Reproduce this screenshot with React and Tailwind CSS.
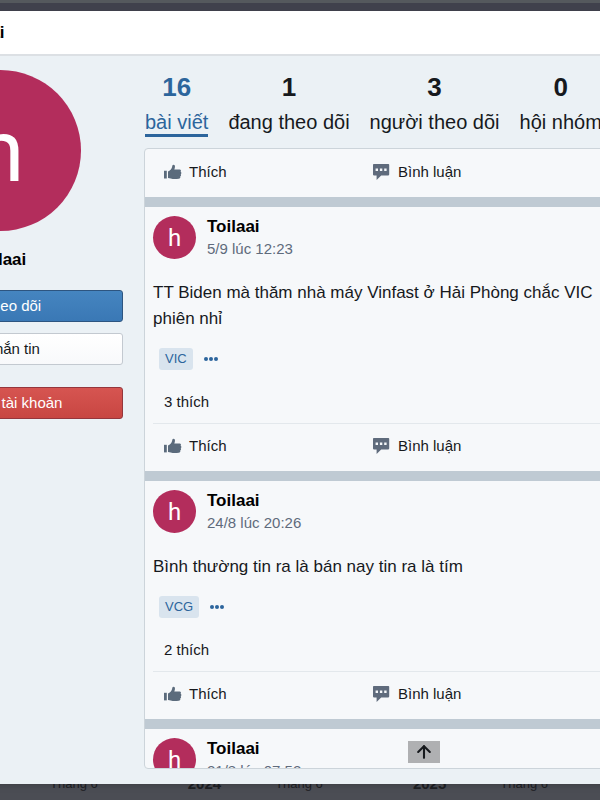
import { ArrowUp, Ban, Mail, UserPlus } from 'lucide-react'

const stats = [
  { value: 16, label: 'bài viết', active: true },
  { value: 1, label: 'đang theo dõi' },
  { value: 3, label: 'người theo dõi' },
  { value: 0, label: 'hội nhóm' },
]

const posts = [
  {
    date: '5/9 lúc 12:23',
    text: 'TT Biden mà thăm nhà máy Vinfast ở Hải Phòng chắc VIC phiên nhỉ',
    tag: 'VIC',
    likes: 3,
  },
  {
    date: '24/8 lúc 20:26',
    text: 'Bình thường tin ra là bán nay tin ra là tím',
    tag: 'VCG',
    likes: 2,
  },
  { date: '21/8 lúc 07:52', text: '', tag: 'VIC', likes: 1 },
]

function ThumbIcon() {
  return (
    <svg viewBox="0 0 18 16" className="w-[18px] h-4 shrink-0 mt-px" fill="#5b6b7c" aria-hidden="true">
      <path d="M0 6.8h2.8v7.6H0z" />
      <path d="M4 7.4C6 6.6 7.6 5 8 3.2L8.4 1.5C8.6 0.5 10.3 0.3 10.8 1.5C11.2 2.6 10.8 4.2 10.3 5.6H15.6C17.1 5.6 17.4 7.2 16.6 7.8C17.7 8.3 17.6 9.8 16.7 10.2C17.4 10.8 17.1 12.1 16.2 12.4C16.7 13.4 16 14.6 14.7 14.8C11.8 15.3 8.6 15.2 6.8 14.6C5.8 14.2 5.1 13.9 4 13.9Z" />
    </svg>
  )
}

function CommentIcon() {
  return (
    <svg viewBox="0 0 18 16" className="w-[18px] h-4 shrink-0 mt-px" aria-hidden="true">
      <path d="M0.8 0H15.4Q16.2 0 16.2 0.8V10.6Q16.2 11.4 15.4 11.4H8.2L3.6 16V11.4H0.8Q0 11.4 0 10.6V0.8Q0 0 0.8 0Z" fill="#5f6b7c" />
      <path d="M2.6 4.6h2.4v2.4H2.6zM6.9 4.6h2.4v2.4H6.9zM11.2 4.6h2.4v2.4h-2.4z" fill="#f6f8fa" />
    </svg>
  )
}

function Actions() {
  return (
    <div className="flex h-[47px] pl-[11px] pb-1 text-[15px] leading-5">
      <button className="flex items-center gap-[7px] w-[209px]">
        <ThumbIcon />
        Thích
      </button>
      <button className="flex items-center gap-[7px]">
        <CommentIcon />
        Bình luận
      </button>
    </div>
  )
}

function Post({ post }) {
  return (
    <article className="px-2 pt-[9px] border-t-10 border-[#bfcad3]">
      <header className="flex gap-[11px]">
        <div className="size-[43px] rounded-full bg-[#b32d5c] text-white font-[Roboto] text-2xl flex items-center justify-center">h</div>
        <div>
          <h2 className="text-[17px] leading-[22px] font-bold text-black">Toilaai</h2>
          <time className="block text-[15px] leading-[22px] text-[#5f6b7c]">{post.date}</time>
        </div>
      </header>
      <p className="mt-5 text-[17px] leading-[26px]">{post.text}</p>
      <div className="mt-4 pl-[6px] flex items-center gap-[11px]">
        <a href="#" className="h-[22px] px-[6px] rounded-[3px] bg-[#d9e4ee] text-[#2c659c] text-[13px] leading-[22px]">{post.tag}</a>
        <button aria-label="Thêm" className="flex gap-px text-[#2c659c]">
          <span className="size-1 rounded-full bg-current"></span>
          <span className="size-1 rounded-full bg-current"></span>
          <span className="size-1 rounded-full bg-current"></span>
        </button>
      </div>
      <p className="mt-[22px] mb-[11px] pl-[11px] text-[15px] leading-5">{post.likes} thích</p>
      <div className="border-t border-[#e3e8ec]">
        <Actions />
      </div>
    </article>
  )
}

function Sidebar() {
  return (
    <aside className="w-[246px] shrink-0 pt-[14px] flex flex-col items-stretch">
      <div className="self-center size-[161px] rounded-full bg-[#b32d5c] text-white font-[Roboto] text-[88px] flex items-center justify-center">h</div>
      <h2 className="mt-[18px] mb-[19px] text-center text-[17px] leading-[22px] font-bold text-black">Toilaai</h2>
      <button className="h-8 flex items-center justify-center gap-2 rounded-[3px] border border-[#2d5580] bg-linear-to-b from-[#4585c0] to-[#3a78b5] text-white text-[15px]">
        <UserPlus size={16} />
        Theo dõi
      </button>
      <button className="mt-[11px] h-8 flex items-center justify-center gap-2 rounded-[3px] border border-[#c3c9d0] bg-linear-to-b from-white to-[#f8f9fb] text-[15px]">
        <Mail size={16} />
        Nhắn tin
      </button>
      <button className="mt-[22px] h-8 flex items-center justify-center gap-2 rounded-[3px] border border-[#95363c] bg-linear-to-b from-[#d65551] to-[#c84642] text-white text-[15px]">
        <Ban size={16} />
        Chặn tài khoản
      </button>
    </aside>
  )
}

export default function App() {
  return (
    <div className="h-screen overflow-hidden flex flex-col bg-[#4b4d54] text-[#16191d] font-['Liberation_Sans',Arial,sans-serif]">
      <div className="h-[11px] shrink-0 bg-[#40414c] border-t-3 border-[#55595d]"></div>

      {/* profile dialog, wider than the window on both sides */}
      <section role="dialog" aria-label="Toilaai" className="relative z-10 flex-1 min-h-0 -ml-[140px] -mr-10 flex flex-col bg-[#ebf1f5] shadow-md">
        <header className="h-[45px] shrink-0 flex items-center pl-[92px] bg-white border-b-2 border-[#dce0e4]">
          <h1 className="text-[17px] font-bold text-black">Toilaai</h1>
        </header>

        <div className="flex-1 min-h-0 flex gap-[21px] pl-[17px] pb-[15px]">
          <Sidebar />

          <div className="flex-1 min-w-0 flex flex-col">
            <nav className="flex gap-5 pt-[15px] pb-[11px] pl-px">
              {stats.map((s) => (
                <a
                  key={s.label}
                  href="#"
                  className={s.active ? 'text-center text-[#2c659c]' : 'text-center'}
                >
                  <span className="block text-[26px] leading-8 font-bold">{s.value}</span>
                  <span
                    className={
                      s.active
                        ? 'block mt-[7px] text-xl leading-6 whitespace-nowrap border-b-3 border-[#2c659c]'
                        : 'block mt-[7px] text-xl leading-6 whitespace-nowrap'
                    }
                  >
                    {s.label}
                  </span>
                </a>
              ))}
            </nav>

            <div className="relative flex-1 min-h-0 overflow-hidden rounded-[4px] border border-[#ccd4da] bg-[#f6f8fa]">
              <div className="px-2 pt-px">
                <Actions />
              </div>
              {posts.map((p) => (
                <Post key={p.date} post={p} />
              ))}
              <button aria-label="Lên đầu trang" className="absolute left-[263px] bottom-[5px] w-8 h-[22px] flex items-center justify-center bg-[#afb0b2] text-[#16191d]">
                <ArrowUp size={20} strokeWidth={2.5} />
              </button>
            </div>
          </div>
        </div>
      </section>

      {/* timeline labels behind the dialog */}
      <div className="h-7 -mt-3 shrink-0 flex items-start justify-between pl-[50px] pr-[52px] text-[13px] leading-6 text-[#1e2024]">
        <span>Tháng 6</span>
        <b className="ml-9 text-[15px]">2024</b>
        <span>Tháng 6</span>
        <b className="ml-9 text-[15px]">2025</b>
        <span>Tháng 6</span>
      </div>
    </div>
  )
}
